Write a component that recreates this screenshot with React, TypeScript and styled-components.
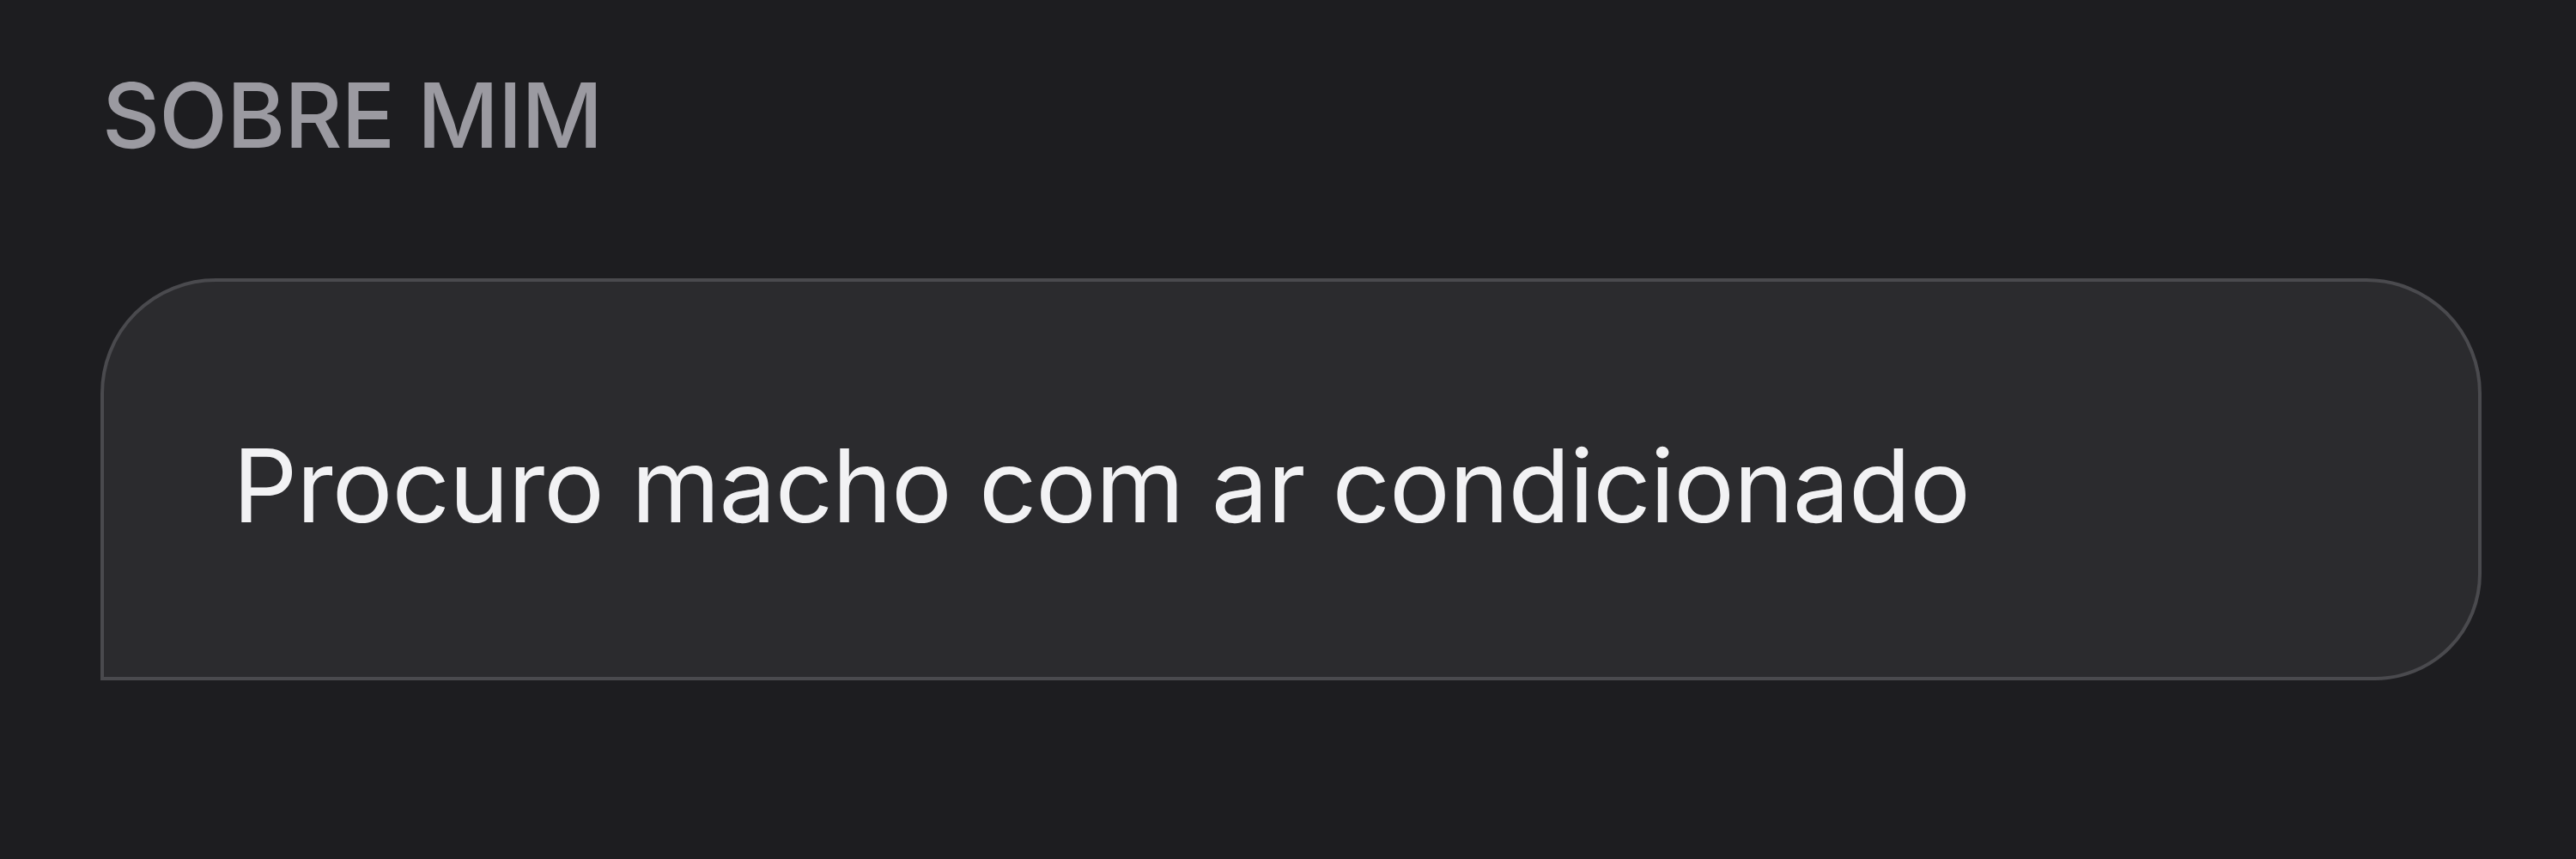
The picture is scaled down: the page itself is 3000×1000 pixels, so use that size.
import React from "react";
import styled, { createGlobalStyle } from "styled-components";

const Global = createGlobalStyle`
  html, body { margin: 0; padding: 0; background: #1d1d20; }
  body { width: 3000px; height: 1000px; overflow: hidden; }
`;

const Page = styled.main`
  width: 3000px;
  height: 1000px;
  box-sizing: border-box;
  padding: 72px 110px 0 117px;
  display: flex;
  flex-direction: column;
  gap: 127px;
  background: #1d1d20;
  font-family: Inter, "Noto Sans", sans-serif;
`;

const Heading = styled.h2`
  margin: 0;
  padding-left: 2px;
  font-size: 104px;
  line-height: 1.2;
  font-weight: 500;
  letter-spacing: -1px;
  color: #9b9aa1;
  text-transform: uppercase;
`;

const Bubble = styled.section`
  box-sizing: border-box;
  height: 468px;
  display: flex;
  align-items: center;
  padding: 16px 80px 0 150px;
  background: #2b2b2e;
  border: 4px solid #4a4a4e;
  border-radius: 134px 134px 124px 0;
`;

const Body = styled.p`
  margin: 0;
  font-size: 118px;
  line-height: 1.2;
  font-weight: 400;
  color: #f2f2f4;
  letter-spacing: -1px;
`;

export default function App() {
  return (
    <>
      <Global />
      <Page>
        <Heading>Sobre mim</Heading>
        <Bubble>
          <Body>Procuro macho com ar condicionado</Body>
        </Bubble>
      </Page>
    </>
  );
}
